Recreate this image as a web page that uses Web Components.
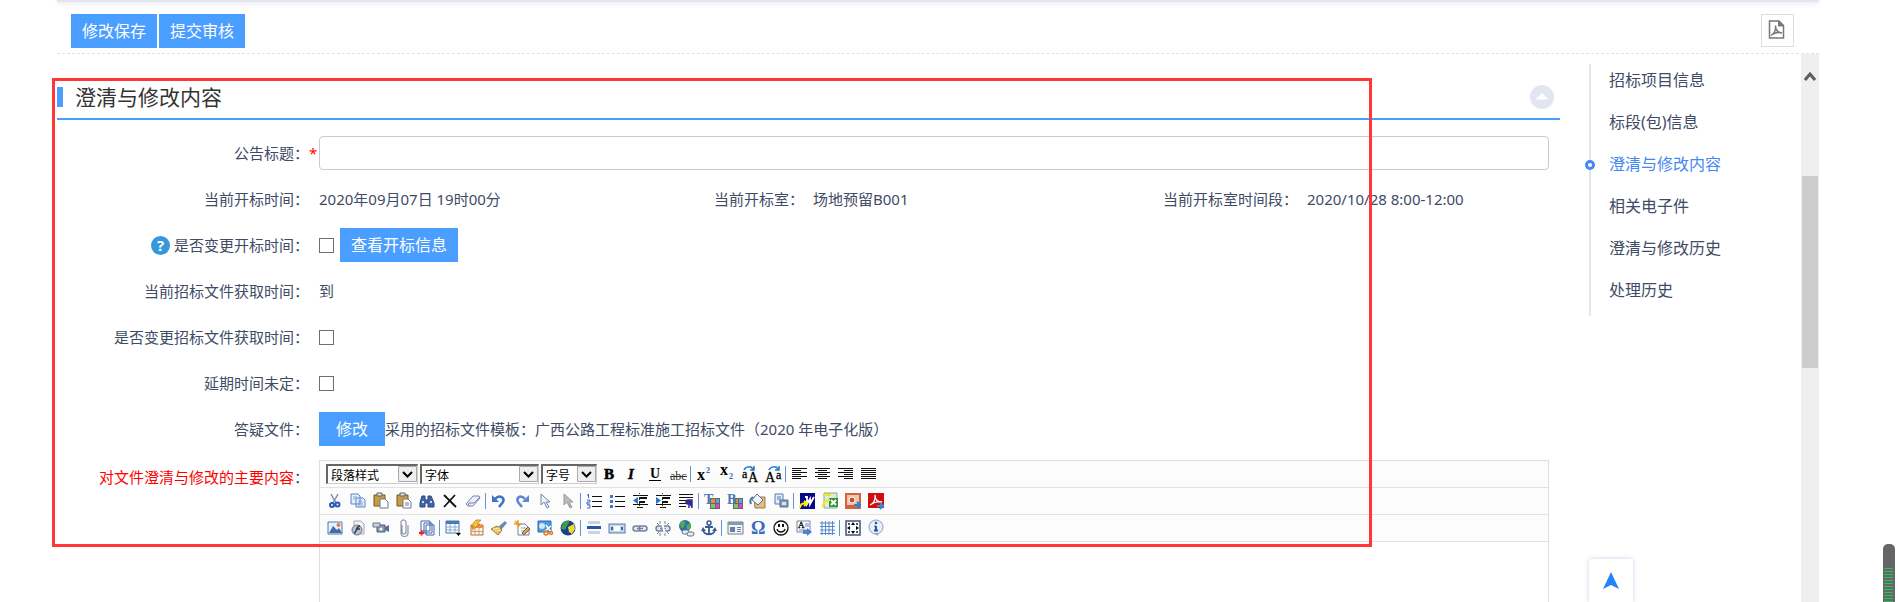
<!DOCTYPE html>
<html lang="zh-CN">
<head>
<meta charset="utf-8">
<title>澄清与修改内容</title>
<style>
    body {
        margin: 0;
        background: #fff;
        color: #414b66;
        font: 15px/34px "Noto Sans", "Noto Sans CJK SC", sans-serif;
    }
</style>
</head>
<body>
<app-frame>
    <action-bar slot="bar">
        <blue-button>修改保存</blue-button>
        <blue-button>提交审核</blue-button>
    </action-bar>
    <form-section title="澄清与修改内容">
        <form-row required>
            <label slot="label" for="title">公告标题：</label>
            <input type="text" id="title">
        </form-row>
        <form-row>
            <span slot="label">当前开标时间：</span>
            <info-grid>
                <span>2020年09月07日 19时00分</span>
                <span slot="label2">当前开标室：</span>
                <span slot="value2">场地预留B001</span>
                <span slot="label3">当前开标室时间段：</span>
                <span slot="value3">2020/10/28 8:00-12:00</span>
            </info-grid>
        </form-row>
        <form-row>
            <help-mark slot="label"></help-mark>
            <label slot="label" for="changeOpen">是否变更开标时间：</label>
            <input type="checkbox" id="changeOpen">
            <blue-button class="after">查看开标信息</blue-button>
        </form-row>
        <form-row>
            <span slot="label">当前招标文件获取时间：</span>
            <span>到</span>
        </form-row>
        <form-row>
            <label slot="label" for="changeGet">是否变更招标文件获取时间：</label>
            <input type="checkbox" id="changeGet">
        </form-row>
        <form-row>
            <label slot="label" for="undecided">延期时间未定：</label>
            <input type="checkbox" id="undecided">
        </form-row>
        <form-row>
            <span slot="label">答疑文件：</span>
            <blue-button wide>修改</blue-button>
            <span>采用的招标文件模板：广西公路工程标准施工招标文件（2020 年电子化版）</span>
        </form-row>
        <form-row tall>
            <span slot="label"><span style="color:#f00">对文件澄清与修改的主要内容</span>：</span>
            <rich-editor></rich-editor>
        </form-row>
    </form-section>
    <side-nav slot="nav">
        <a href="#project">招标项目信息</a>
        <a href="#package">标段(包)信息</a>
        <a href="#content" class="on">澄清与修改内容</a>
        <a href="#files">相关电子件</a>
        <a href="#changes">澄清与修改历史</a>
        <a href="#history">处理历史</a>
    </side-nav>
</app-frame>
<mark-box></mark-box>
<top-button></top-button>
<level-meter></level-meter>

<script>
class BaseElement extends HTMLElement {
    constructor() {
        super();
        this.attachShadow({mode: 'open'});
        this.shadowRoot.innerHTML = this.render();
    }
}

class AppFrame extends BaseElement {
    render() {
        return `
            <style>
                :host {
                    display: flex;
                    flex-direction: column;
                    height: 100vh;
                    overflow: hidden;
                    padding: 0 79px 0 57px;
                    box-sizing: border-box;
                }
                .strip {
                    flex: none;
                    height: 2px;
                    background: #e3e5f0;
                    box-shadow: 0 1px 5px #d5d8e8;
                }
                .content {
                    display: flex;
                    flex: 1;
                    min-height: 0;
                }
                .main {
                    flex: 1;
                    min-width: 0;
                    overflow: hidden;
                }
                nav {
                    flex: none;
                    width: 212px;
                    padding: 10px 0 0 29px;
                }
                .scroll {
                    flex: none;
                    width: 18px;
                    background: #efefef;
                }
                .scroll svg {
                    display: block;
                    margin: 17px auto 0;
                }
                .thumb {
                    height: 192px;
                    margin: 94px 1px 0;
                    background: #cdcdcd;
                }
            </style>
            <div class="strip"></div>
            <slot name="bar"></slot>
            <div class="content">
                <div class="main"><slot></slot></div>
                <nav><slot name="nav"></slot></nav>
                <div class="scroll">
                    <svg width="12" height="11" viewBox="0 0 12 11"><path d="M1 9 6 3l5 6" fill="none" stroke="#5c5c5c" stroke-width="3"/></svg>
                    <div class="thumb"></div>
                </div>
            </div>
        `;
    }
}

class ActionBar extends BaseElement {
    render() {
        return `
            <style>
                :host {
                    display: flex;
                    flex: none;
                    gap: 2px;
                    padding: 12px 25px 5px 14px;
                    border-bottom: 1px dashed #d6e6f5;
                }
                .pdf {
                    margin-left: auto;
                    width: 33px;
                    height: 33px;
                    padding: 0;
                    background: #fff;
                    border: 1px solid #ddd;
                }
                .pdf svg { display: block; margin: 0 6px 2px; }
            </style>
            <slot></slot>
            <button class="pdf" aria-label="PDF">
                <svg width="17" height="19" viewBox="0 0 17 19" fill="none" stroke="#777">
                    <path d="M1.500 1h9.500l4.500 4.500v12.500h-14z" stroke-width="1.500"/>
                    <path d="M10.500 1v5h5z" fill="#777"/>
                    <path d="M3 15.500c3-2 5-6 4.500-10 0 4 2.500 7 6.500 7.500-3-1-6.500 0-9 1" stroke-width="1.500"/>
                </svg>
            </button>
        `;
    }
}

class BlueButton extends BaseElement {
    render() {
        return `
            <style>
                :host { display: block; }
                button {
                    display: block;
                    height: 34px;
                    padding: 0 11px;
                    border: 0;
                    background: #4a9eff;
                    color: #fff;
                    font: inherit;
                    font-size: 16px;
                    cursor: pointer;
                }
                :host([wide]) button { padding: 0 17px; }
            </style>
            <button><slot></slot></button>
        `;
    }
}

class FormSection extends BaseElement {
    render() {
        return `
            <style>
                :host { display: block; padding-top: 24px; }
                header {
                    display: flex;
                    align-items: center;
                    height: 38px;
                    padding: 0 6px 2px 0;
                    border-bottom: 2px solid #4a9eff;
                }
                i {
                    width: 6px;
                    height: 20px;
                    background: #4a9eff;
                }
                h2 {
                    flex: 1;
                    margin: 0 0 0 12px;
                    color: #333;
                    font-size: 21px;
                    font-weight: normal;
                    line-height: 38px;
                }
                button {
                    width: 24px;
                    height: 24px;
                    padding: 0;
                    border: 0;
                    background: none;
                }
                svg { display: block; }
                .body { padding: 10px 11px 0 0; }
            </style>
            <header>
                <i></i>
                <h2>${this.getAttribute('title')}</h2>
                <button aria-label="收起"><svg width="24" height="24"><circle cx="12" cy="12" r="12" fill="#e2e6f1"/><path d="M6.500 14 12 8.500l5.500 5.500z" fill="#fff" stroke="#fff" stroke-linejoin="round"/></svg></button>
            </header>
            <div class="body"><slot></slot></div>
        `;
    }
}

class FormRow extends BaseElement {
    render() {
        return `
            <style>
                :host { display: flex; height: 46px; align-items: center; }
                :host([tall]) { height: auto; align-items: flex-start; padding-top: 8px; }
                .label {
                    display: flex;
                    flex: none;
                    justify-content: flex-end;
                    align-items: center;
                    width: 252px;
                }
                .star { flex: none; width: 10px; color: #f00; line-height: 34px; }
                .field { display: flex; flex: 1; min-width: 0; align-items: center; }
                ::slotted(input[type=text]) {
                    flex: 1;
                    height: 34px;
                    box-sizing: border-box;
                    border: 1px solid #ccc;
                    border-radius: 4px;
                    padding: 0 8px;
                    font: inherit;
                }
                ::slotted(input[type=checkbox]) {
                    appearance: none;
                    width: 15px;
                    height: 15px;
                    margin: 0;
                    border: 1px solid #6b6f7c;
                    background: #fff;
                }
                ::slotted(.after) { margin-left: 6px; }
                ::slotted(info-grid), ::slotted(rich-editor) { flex: 1; min-width: 0; }
            </style>
            <div class="label"><slot name="label"></slot></div>
            <div class="star">${this.hasAttribute('required') ? '*' : ''}</div>
            <div class="field"><slot></slot></div>
        `;
    }
}

class InfoGrid extends BaseElement {
    render() {
        return `
            <style>
                :host {
                    display: grid;
                    grid-template-columns: 49fr 49fr 24fr;
                    white-space: nowrap;
                }
                div { display: flex; justify-content: space-between; padding-right: 9px; }
            </style>
            <div><slot></slot><slot name="label2"></slot></div>
            <div><slot name="value2"></slot><slot name="label3"></slot></div>
            <div><slot name="value3"></slot></div>
        `;
    }
}

class HelpMark extends BaseElement {
    render() {
        return `
            <style>
                :host {
                    width: 19px;
                    height: 19px;
                    margin-right: 4px;
                    border-radius: 50%;
                    background: #3498db;
                    color: #fff;
                    font: bold 15px/19px "Open Sans", sans-serif;
                    text-align: center;
                }
            </style>?
        `;
    }
}

class SideNav extends BaseElement {
    render() {
        return `
            <style>
                :host { display: block; border-left: 2px solid #e2e6f1; }
                ::slotted(a) {
                    display: block;
                    position: relative;
                    padding: 0 0 9px 18px;
                    color: #414b66;
                    font-size: 16px;
                    line-height: 33px;
                    text-decoration: none;
                }
                ::slotted(a.on) { color: #4688f1; }
                ::slotted(a.on)::before {
                    content: "";
                    position: absolute;
                    left: -6px;
                    top: 12px;
                    width: 4px;
                    height: 4px;
                    border: 3px solid #4688f1;
                    border-radius: 50%;
                    background: #fff;
                }
            </style>
            <slot></slot>
        `;
    }
}

class DropList extends BaseElement {
    render() {
        return `
            <style>
                :host { display: grid; height: 20px; flex: none; }
                select, svg { grid-area: 1 / 1; }
                select {
                    appearance: none;
                    width: 100%;
                    height: 20px;
                    padding: 0 20px 0 3px;
                    border: 1px solid #ccc;
                    border-top: 2px solid #666;
                    border-left: 2px solid #666;
                    border-radius: 0;
                    background: #fff;
                    color: #000;
                    font: 12px/16px "Noto Sans CJK SC", sans-serif;
                }
                svg { justify-self: end; align-self: center; margin-right: 1px; pointer-events: none; }
            </style>
            <select aria-label="${this.getAttribute('text')}"><option>${this.getAttribute('text')}</option></select>
            <svg width="19" height="16"><path d="M.5.5h18v15H.5z" fill="#eee" stroke="#aaa"/><path d="m5 6 4.500 4.500L14 6" fill="none" stroke="#000" stroke-width="2"/></svg>
        `;
    }
}

// shared pieces of the toolbar icons, all drawn on a 16x16 grid
const lines = (list, color = '#111') => `<path d="${list.map(l => `M${l[0]} ${l[1]}.5h${l[2]}`).join('')}" stroke="${color}" fill="none"/>`;
const serif = (x, y, size, text, more = '') => `<text x="${x}" y="${y}" font-family="Liberation Serif" font-size="${size}" ${more}>${text}</text>`;
const clip = '<path d="M1 2h11v11H1z" fill="#c99b45" stroke="#765719"/><path d="M4 0h5v3H4z" fill="#ddd" stroke="#666"/><path d="M7 6h5l3 3v6H7z" fill="#fff" stroke="#6b7892"/>';
const swatch = '<path d="M6 5h10v11H6z" fill="#666"/><path d="M7 6h4v4H7z" fill="#e98b41"/><path d="M12 6h3v4h-3z" fill="#59a5db"/><path d="M7 11h4v4H7z" fill="#7bc56a"/><path d="M12 11h3v4h-3z" fill="#e33ddd"/>';
const link = '<rect x="1" y="6" width="8" height="5" rx="2.5" fill="#e3e8f0" stroke="#74849f" stroke-width="1.500"/><rect x="7" y="6" width="8" height="5" rx="2.5" fill="#e3e8f0" stroke="#74849f" stroke-width="1.500"/><path d="M5 8.500h6" stroke="#74849f" stroke-width="1.500"/>';
const globe = '<circle cx="8" cy="8" r="7" fill="#2166b8" stroke="#174b87"/><path d="M3 3c3-2 5-1 5 1S5 7 5 9s-3 0-3-2zM9 6l4-3 2 4-3 5-3-2z" fill="#55ad45"/>';
const indentLines = lines([[1, 2, 15], [7, 4, 8], [7, 5, 8], [7, 8, 6], [7, 9, 6], [1, 11, 15], [5, 14, 6]]);

const icons = {
    bold: serif(3, 13, 15, 'B', 'font-weight="900" stroke="#000" stroke-width=".6"'),
    italic: serif(4, 13, 15, 'I', 'font-weight="bold" font-style="italic" stroke="#000" stroke-width=".4"'),
    underline: serif(3, 12, 14, 'U', 'font-weight="bold"') + '<path d="M2 14.500h12" stroke="#000"/>',
    strike: serif(0, 14, 12, 'abc', 'fill="#333"') + '<path d="M0 10.500h17" stroke="#333"/>',
    sup: serif(1, 14, 16, 'x', 'font-weight="bold"') + serif(10, 7, 8, '2', 'font-weight="bold" fill="#3566be"'),
    sub: serif(1, 9, 16, 'x', 'font-weight="bold"') + serif(10, 13, 8, '2', 'font-weight="bold" fill="#3566be"'),
    upper: serif(0, 12, 12, 'a', 'stroke="#000" stroke-width=".3"') + serif(6, 16, 14, 'A', 'stroke="#000" stroke-width=".3"') + '<path d="M2 4c2-4 7-4 9-1m-3 1h4V0" fill="none" stroke="#1f78c8" stroke-width="1.500"/>',
    lower: serif(0, 16, 14, 'A', 'stroke="#000" stroke-width=".3"') + serif(11, 13, 12, 'a', 'stroke="#000" stroke-width=".3"') + '<path d="M4 4c2-4 7-4 9-1m-3 1h4V0" fill="none" stroke="#1f78c8" stroke-width="1.500"/>',
    left: lines([[1, 2, 15], [1, 4, 9], [1, 6, 15], [1, 8, 9], [1, 10, 15], [1, 12, 9]]),
    center: lines([[1, 2, 15], [4, 4, 9], [1, 6, 15], [4, 8, 9], [1, 10, 15], [4, 12, 9]]),
    right: lines([[1, 2, 15], [7, 4, 9], [1, 6, 15], [7, 8, 9], [1, 10, 15], [7, 12, 9]]),
    justify: lines([[1, 2, 15], [1, 4, 15], [1, 6, 15], [1, 8, 15], [1, 10, 15], [1, 12, 15]]),
    cut: '<path d="m4 1 5 9M11 1 6 10" stroke="#7b8ca6" stroke-width="1.500"/><circle cx="5" cy="12" r="2" fill="none" stroke="#2b57b8" stroke-width="2"/><circle cx="10.500" cy="11.500" r="2" fill="none" stroke="#2b57b8" stroke-width="2"/>',
    copy: '<path d="M1 1h7l2 2v8H1zM6 5h7l2 2v7H6z" fill="#e7effb" stroke="#5b83c9"/><path d="M3 4h4M3 6h2M8 8h4M8 10h5M8 12h5" stroke="#7da0dc"/>',
    paste: clip,
    pasteText: clip + '<path d="M9 10h4M9 12h4" stroke="#777"/>',
    find: '<path d="M3 3h3v4h3V3h3l3 7v4H9v-4H6v4H1v-4z" fill="#4264a8" stroke="#29477f"/><path d="M3 9h2M11 9h2" stroke="#c9dbff" stroke-width="2"/>',
    remove: '<path d="m2 2 12 12M13 2 2 14" stroke="#111" stroke-width="1.800"/>',
    eraser: '<path d="m1 11 7-8h6l1 2-7 8H3z" fill="#e9eefa" stroke="#7787a5"/><path d="m3 13 1-3h5l6-6" fill="none" stroke="#7787a5"/>',
    undo: '<path d="M4 6c5-5 10-1 8 3l-4 5" fill="none" stroke="#4070c9" stroke-width="2.500"/><path d="M1 2v7h7z" fill="#4070c9"/>',
    redo: '<path d="M11 6C6 1 2 5 4 9l4 5" fill="none" stroke="#5b87d6" stroke-width="2.500"/><path d="M15 2v7H8z" fill="#5b87d6"/>',
    cursor: '<path d="M4 1v11l3-3 3 6 2-1-3-5h4z" fill="#eef4ff" stroke="#7285a6"/>',
    cursorOff: '<path d="M4 1v11l3-3 3 6 2-1-3-5h4z" fill="#bbb" stroke="#999"/>',
    ol: lines([[6, 3, 10], [6, 8, 10], [6, 13, 10]]) + '<path d="M2.500 1v4M1 2h1M1 7h3v2H1v2h3M1 12h3v3H1" fill="none" stroke="#3e6cb4"/>',
    ul: lines([[6, 3, 10], [6, 8, 10], [6, 13, 10]]) + '<path d="M1 2h3v3H1zM1 7h3v3H1zM1 12h3v3H1z" fill="#4774bd"/>',
    outdent: indentLines + '<path d="M6 4v7L1 7.500z" fill="#2a72ce"/><path d="M7.500 0v16" stroke="#333" stroke-dasharray="1 1"/>',
    indent: indentLines + '<path d="M1 4v7l5-3.500z" fill="#2a72ce"/><path d="M7.500 0v16" stroke="#333" stroke-dasharray="1 1"/>',
    para: lines([[1, 1, 14], [1, 4, 14], [1, 7, 7], [1, 10, 7], [1, 13, 7]]) + '<path d="M11 15V7m3 8V7h-4a2 2 0 0 0 0 4h1" fill="#312c91" stroke="#312c91" stroke-width="1.500"/>',
    foreColor: swatch + serif(0, 11, 14, 'T', 'font-weight="bold" fill="#4c79b9"'),
    backColor: swatch + serif(0, 11, 14, 'B', 'font-weight="bold" fill="#4c79b9"'),
    bucket: '<path d="M4 4h11v11H5z" fill="#e5bd75" stroke="#9d7b49"/><path d="m7 1 6 6-5 5-6-5z" fill="#eef3fc" stroke="#57739f"/><path d="M3 4C0 6 0 9 1 11" stroke="#4473b1" fill="none" stroke-width="2"/>',
    format: '<path d="M2 1h8v10H2z" fill="#e2ecfb" stroke="#5979ad"/><path d="M7 7h8v7H7z" fill="#899ab7" stroke="#5d6f91"/><path d="M4 4h4M4 6h4" stroke="#5979ad"/><path d="M9 9h4v3H9z" fill="#d6e3f8"/>',
    word: '<path d="M1 0h15v16H1z" fill="#070886"/><path d="M6 4h2v7l3-5v5l4-7" fill="none" stroke="#fff" stroke-width="1.800"/><path d="M1 15c0-4 2-5 6-5m-2-2 3 2-3 3" fill="none" stroke="#fff200" stroke-width="2"/>',
    excel: '<path d="M2 0h13v15H2z" fill="#dbeddb" stroke="#8cab82"/><path d="M7 5h9v9H7z" fill="#2d963d"/><path d="m9 7 5 5m0-5-5 5" stroke="#fff" stroke-width="2"/><path d="M1 14C1 9 3 7 8 7M2 2h7" fill="none" stroke="#f1e51e" stroke-width="2"/>',
    ppt: '<path d="M0 0h16v16H0z" fill="#d6603f"/><path d="M2 2h12v10H2z" fill="#f0c3ae"/><circle cx="7" cy="7" r="3" fill="#c9512d" stroke="#fff"/><path d="M9 12h5m-2-3 3 3-3 3" fill="none" stroke="#2387cd" stroke-width="2"/>',
    pdf: '<path d="M0 0h16v15H0z" fill="#d20d10"/><path d="M2 12C5 11 8 7 7 2c0 5 3 7 7 7-4-1-8 0-12 3" fill="none" stroke="#fff" stroke-width="1.300"/><path d="M9 13h5m-2-3 3 3-3 3" fill="none" stroke="#318fd0" stroke-width="2"/>',
    image: '<path d="M1 2h14v12H1z" fill="#e4f0fe" stroke="#547aac"/><path d="m2 13 4-7 4 4 2-2 3 5z" fill="#456ca6"/><circle cx="11.500" cy="5" r="2" fill="#ec7a4d"/>',
    flash: '<path d="M4 1h7l3 3v10H4z" fill="#f3f3f3" stroke="#aaa"/><circle cx="7" cy="10" r="5" fill="#b7c2cf" stroke="#6c7a8c"/><path d="M10 6c-4 0-3 6-6 7m2-4h4" fill="none" stroke="#26364b" stroke-width="1.500"/>',
    video: '<path d="M4 5h8v7H4z" fill="#8a9aac" stroke="#4b5d74"/><path d="M0 3h7v4H0z" fill="#ccd5de" stroke="#61738c"/><path d="m12 7 4-2v7l-4-2z" fill="#5c718f"/><circle cx="8" cy="9" r="1.500" fill="#fff"/>',
    attach: '<path d="M6 5v7a2 2 0 0 0 4 0V3a2 2 0 0 0-5-1v11a3 3 0 0 0 7 0V5" fill="none" stroke="#8c97a5" stroke-width="1.200"/>',
    pages: '<path d="M7 5h8v10H7zM5 3h8v10H5zM2 1h9v10H2z" fill="#fff" stroke="#3c66ab"/><path d="M0 13h5M2.500 10.500v5" stroke="#e22" stroke-width="2"/>',
    table: '<path d="M1 1h13v12H1z" fill="#fff" stroke="#4d75af"/><path d="M1 1h13v3H1z" fill="#4a79ba"/><path d="M1 7h13M1 10h13M5 4v9M10 4v9" stroke="#8ba9d1"/><path d="M11 13h5l-2.500 3z"/>',
    tableBox: '<path d="M3 5h12v10H3z" fill="#fff7e6" stroke="#b66f44"/><path d="M3 5h12v3H3z" fill="#e88d3c"/><path d="M3 11.500h12M7 8v7M11 8v7" stroke="#d39875"/><path d="M8 0h5L9 4h3l-8 6 2-4H3z" fill="#f5c43a" stroke="#b1702c" stroke-width=".7"/>',
    brush: '<path d="m14 1 2 2-6 7-3-3z" fill="#708aab"/><path d="m6 6 5 4-4 5-7-6z" fill="#e6ba5e" stroke="#a87c35"/><path d="m2 9 7-1m-5 3 6-1" stroke="#fff0b3"/>',
    clean: '<path d="M4 4h7l4 4v7H4z" fill="#fff" stroke="#748197"/><path d="M7 8h5M7 11h5" stroke="#8c9cb6"/><path d="m1 1 5 5M4 0v7M0 4h7" stroke="#eb9b2f" stroke-width="1.500"/><path d="m8 13 6-6 2 2-6 6z" fill="#d5a64f" stroke="#77603c"/>',
    snap: '<path d="M1 1h13v11H1z" fill="#4a9be0" stroke="#296ba7"/><circle cx="5" cy="6" r="3" fill="#cfe7fb"/><path d="m7 12 7-6m-5-1 5 7" stroke="#fff" stroke-width="1.500"/><circle cx="9" cy="13" r="2" fill="none" stroke="#e87a25" stroke-width="1.500"/><circle cx="14" cy="13" r="1.500" fill="none" stroke="#e87a25" stroke-width="1.500"/>',
    world: '<circle cx="8" cy="8" r="7.500" fill="#173f8c"/><path d="M3 3c3-3 7-2 6 0S6 6 6 8s-4 2-5 0z" fill="#3f9a4b"/><path d="m8 7 6-3 1 5-3 5-3-2z" fill="#e8dd32"/>',
    hr: '<path d="M2 1h12v3H2zM2 11h12v3H2z" fill="#c8d4e5"/><path d="M1 6h14v3H1z" fill="#2458a8"/>',
    pageBreak: '<rect x="0" y="4" width="16" height="9" fill="#c4d6ee" stroke="#5b7fab"/><path d="M3 7v3M13 7v3" stroke="#43689b" stroke-width="2"/><path d="M5 6h6v5H5z" fill="#fff"/>',
    link: link,
    unlink: link + '<path d="m7 3 3 11" stroke="#fff" stroke-width="2"/><path d="M5 1v3m5-3v3M2 3l2 2m10-2-2 2M5 16v-3m5 3v-3M2 14l2-2m10 2-2-2" stroke="#7d8796"/>',
    webLink: '<circle cx="7" cy="6" r="6" fill="#2d6fb5"/><path d="M2 3c3-3 6-2 5 1S5 8 3 8zM8 6l4-3 1 4-3 4z" fill="#55ad45"/><rect x="4" y="10" width="7" height="4" rx="2" fill="#e8ebf0" stroke="#68768c"/><rect x="9" y="12" width="7" height="4" rx="2" fill="#e8ebf0" stroke="#68768c"/>',
    anchor: '<circle cx="8" cy="3" r="2" fill="none" stroke="#365e93" stroke-width="1.500"/><path d="M8 5v9M4 7h8M2 9c0 7 12 7 12 0" fill="none" stroke="#365e93" stroke-width="1.800"/><path d="M0 11l2-4 3 4zM16 11l-2-4-3 4z" fill="#365e93"/>',
    template: '<path d="M1 2h15v12H1z" fill="#f2f5f9" stroke="#707f92"/><path d="M1 2h15v3H1z" fill="#8999ad"/><path d="M3 7h5v5H3z" fill="#6580a0"/><path d="M10 7.500h4m-4 2h4m-4 2h4" stroke="#71839b"/>',
    omega: serif(1, 14, 18, 'Ω', 'font-weight="bold" fill="#376bbb"'),
    smile: '<circle cx="8" cy="8" r="7" fill="#fff" stroke="#111" stroke-width="1.300"/><path d="M6 4v3M10 4v3" stroke="#111" stroke-width="2"/><path d="M4 9c1 4 7 4 8 0" fill="none" stroke="#111" stroke-width="1.300"/>',
    note: '<path d="M1 1h13v11H1z" fill="#fff" stroke="#6c85ae"/>' + serif(2, 8, 9, 'A', 'stroke="#000" stroke-width=".3"') + '<path d="M3 10h8M9 4h4M9 6h4" stroke="#6c85ae"/><path d="M7 10h4V8l5 4-5 4v-2H7z" fill="#4e81cc"/>',
    grid: '<path d="M3 1v14M6.500 1v14M10 1v14M13.500 1v14M1 3h15M1 6.500h15M1 10h15M1 13.500h15" stroke="#5b85cc"/>',
    full: '<path d="M1 1h14v14H1z" fill="#fff" stroke="#425477" stroke-width="1.500"/><path d="m8 2 2 3H6zM8 14l2-3H6zM2 8l3-2v4zM14 8l-3-2v4z"/><path d="M3 3h2v2H3zM11 3h2v2h-2zM3 11h2v2H3zM11 11h2v2h-2z" fill="#425477"/>',
    about: '<circle cx="8" cy="7" r="7" fill="#e7f0fb" stroke="#8ba1bc"/><path d="m6 13 4 3v-3z" fill="#8ba1bc"/><path d="M8 6v5M6 10.500h4M6.500 6.500H8" stroke="#1d58a8" stroke-width="2"/><circle cx="8" cy="3" r="1.300" fill="#1d58a8"/>'
};

class ToolGroup extends HTMLElement {
    constructor() {
        super();
        this.attachShadow({mode: 'open'});
        const tools = this.getAttribute('tools').split(' ');
        this.shadowRoot.innerHTML = `
            <style>
                :host { display: flex; align-items: center; }
                :host([divided])::before {
                    content: "";
                    width: 1px;
                    height: 16px;
                    margin: 0 1px;
                    background: #6593cf;
                }
                button {
                    display: flex;
                    align-items: center;
                    justify-content: center;
                    width: 23px;
                    height: 24px;
                    padding: 0;
                    border: 0;
                    background: none;
                }
                svg { overflow: visible; }
            </style>
            ${tools.map(t => `<button aria-label="${t}"><svg width="16" height="16" viewBox="0 0 16 16">${icons[t]}</svg></button>`).join('')}
        `;
    }
}

class RichEditor extends BaseElement {
    render() {
        return `
            <style>
                :host {
                    display: block;
                    border: 1px solid #ddd;
                }
                .tools {
                    display: flex;
                    align-items: center;
                    height: 26px;
                    padding-left: 3px;
                    border-bottom: 1px solid #e2e2e2;
                    background: #fdfcfc;
                }
                .lists {
                    display: grid;
                    grid-template-columns: 92px 119px 56px;
                    gap: 2px;
                    margin-left: 3px;
                }
                .edit { height: 300px; }
            </style>
            <div class="tools">
                <div class="lists">
                    <drop-list text="段落样式"></drop-list>
                    <drop-list text="字体"></drop-list>
                    <drop-list text="字号"></drop-list>
                </div>
                <tool-group tools="bold italic underline strike"></tool-group>
                <tool-group divided tools="sup sub upper lower"></tool-group>
                <tool-group divided tools="left center right justify"></tool-group>
            </div>
            <div class="tools">
                <tool-group tools="cut copy paste pasteText find remove eraser"></tool-group>
                <tool-group divided tools="undo redo cursor cursorOff"></tool-group>
                <tool-group divided tools="ol ul outdent indent para"></tool-group>
                <tool-group divided tools="foreColor backColor bucket format"></tool-group>
                <tool-group divided tools="word excel ppt pdf"></tool-group>
            </div>
            <div class="tools">
                <tool-group tools="image flash video attach pages"></tool-group>
                <tool-group divided tools="table tableBox brush clean snap world"></tool-group>
                <tool-group divided tools="hr pageBreak link unlink webLink anchor"></tool-group>
                <tool-group divided tools="template omega smile note grid"></tool-group>
                <tool-group divided tools="full about"></tool-group>
            </div>
            <div class="edit" contenteditable="true"></div>
        `;
    }
}

// red frame laid over the form
class MarkBox extends BaseElement {
    render() {
        return `
            <style>
                :host {
                    position: absolute;
                    left: 52px;
                    right: 526px;
                    top: 78px;
                    height: 463px;
                    border: 3px solid #ff3737;
                    pointer-events: none;
                }
            </style>
        `;
    }
}

class TopButton extends BaseElement {
    render() {
        return `
            <style>
                :host { position: fixed; right: 265px; bottom: -1px; }
                button {
                    display: block;
                    width: 44px;
                    height: 44px;
                    padding: 0;
                    border: 0;
                    border-radius: 2px;
                    background: #fff;
                    box-shadow: 0 0 5px #c5d5e6;
                }
                svg { display: block; margin: 0 auto; }
            </style>
            <button aria-label="返回顶部"><svg width="18" height="18"><path d="m9 0 8 17-8-4-8 4z" fill="#2385f5"/></svg></button>
        `;
    }
}

class LevelMeter extends BaseElement {
    render() {
        return `
            <style>
                :host {
                    position: fixed;
                    right: 3px;
                    bottom: 0;
                    width: 9px;
                    height: 34px;
                    padding: 24px 2px 0 1px;
                    border-radius: 5px 5px 0 0;
                    background: #666;
                }
                div {
                    height: 34px;
                    background: repeating-linear-gradient(#1fc75d 0 1px, #666 1px 3px);
                }
            </style>
            <div></div>
        `;
    }
}

customElements.define("app-frame", AppFrame);
customElements.define("action-bar", ActionBar);
customElements.define("blue-button", BlueButton);
customElements.define("form-section", FormSection);
customElements.define("form-row", FormRow);
customElements.define("info-grid", InfoGrid);
customElements.define("help-mark", HelpMark);
customElements.define("side-nav", SideNav);
customElements.define("drop-list", DropList);
customElements.define("tool-group", ToolGroup);
customElements.define("rich-editor", RichEditor);
customElements.define("mark-box", MarkBox);
customElements.define("top-button", TopButton);
customElements.define("level-meter", LevelMeter);
</script>
</body>
</html>
